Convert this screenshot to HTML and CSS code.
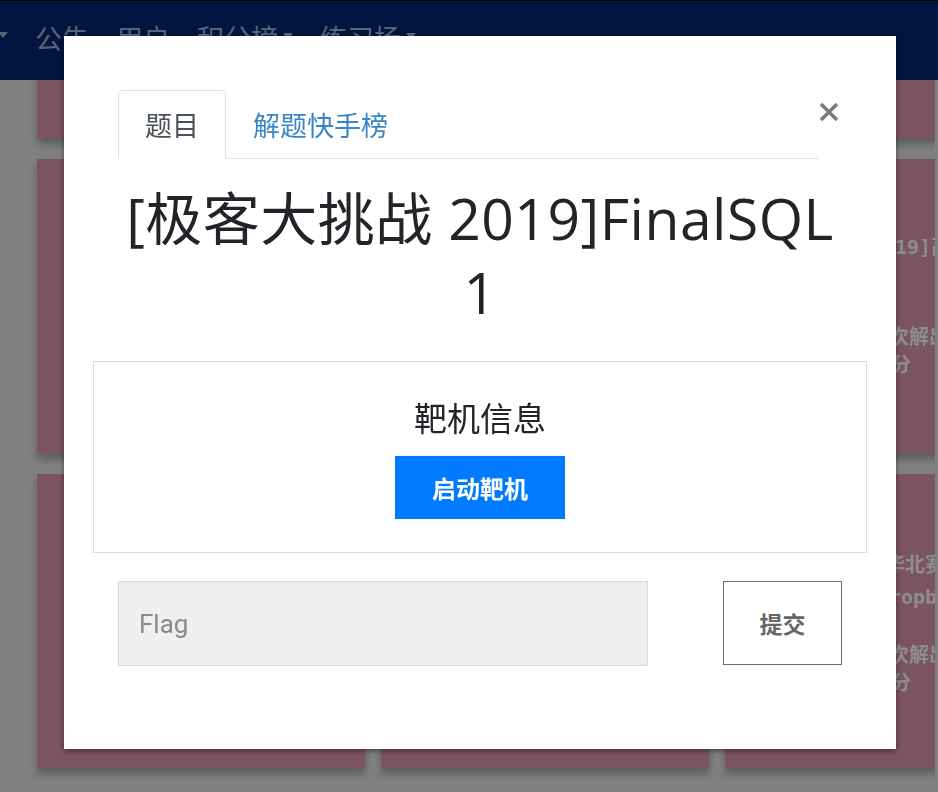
FILE: index.html
```html
<!DOCTYPE html>
<html lang="zh">
<head>
<meta charset="utf-8">
<title>FinalSQL</title>
<link rel="stylesheet" href="styles.css">
</head>
<body>
<nav class="navbar">
  <span class="caret lead"></span>
  <a class="nav-link">公告</a>
  <a class="nav-link">用户</a>
  <a class="nav-link">积分榜<span class="caret"></span></a>
  <a class="nav-link">练习场<span class="caret"></span></a>
</nav>

<main class="content">
  <div class="grid">
    <div class="card"><p class="c-title">[极客大挑战 2019]EasySQL</p><p class="c-meta">8520 次解出</p><p class="c-meta">1 分</p></div>
    <div class="card"><p class="c-title">[HCTF 2018]WarmUp</p><p class="c-meta">9231 次解出</p><p class="c-meta">1 分</p></div>
    <div class="card"><p class="c-title">[极客大挑战 2019]Havefun</p><p class="c-meta">7722 次解出</p><p class="c-meta">1 分</p></div>
    <div class="card"><p class="c-title">[极客大挑战 2019]HardSQL</p><p class="c-meta">2716 次解出</p><p class="c-meta">1 分</p></div>
    <div class="card"><p class="c-title">[极客大挑战 2019]FinalSQL</p><p class="c-meta">1348 次解出</p><p class="c-meta">1 分</p></div>
    <div class="card"><p class="c-title">[极客大挑战 2019]高明的黑客</p><p class="c-meta">1234 次解出</p><p class="c-meta">1 分</p></div>
    <div class="card"><p class="c-title">[CISCN2019 华北赛区 Day2 Web1]Hack World</p><p class="c-meta">2905 次解出</p><p class="c-meta">1 分</p></div>
    <div class="card"><p class="c-title">[网鼎杯 2018]Fakebook</p><p class="c-meta">2310 次解出</p><p class="c-meta">1 分</p></div>
    <div class="card card-low"><p class="c-title">[CISCN2019 华北赛区 Day1 Web1]Dropbox</p><p class="c-meta">1108 次解出</p><p class="c-meta">1 分</p></div>
  </div>
</main>

<div class="modal">
  <div class="modal-header">
    <ul class="tabs">
      <li class="tab active"><a>题目</a></li>
      <li class="tab"><a>解题快手榜</a></li>
    </ul>
    <button class="close" aria-label="Close">
      <svg width="22" height="22" viewBox="0 0 22 22"><path d="M3 3L19 19M19 3L3 19" stroke="#7b7b7b" stroke-width="3.6" stroke-linecap="butt"/></svg>
    </button>
  </div>

  <h1 class="title">[极客大挑战 2019]FinalSQL 1</h1>

  <section class="target">
    <h3 class="target-head">靶机信息</h3>
    <button class="btn-start">启动靶机</button>
  </section>

  <form class="flag-row">
    <input class="flag-input" type="text" placeholder="Flag">
    <button class="btn-submit" type="button">提交</button>
  </form>
</div>
</body>
</html>
```

FILE: styles.css
```css
html, body {
  margin: 0;
  padding: 0;
}
body {
  background: #808080;
  height: 792px;
  overflow: hidden;
  font-family: "Noto Sans", "Noto Sans CJK SC", sans-serif;
}

/* navbar */
.navbar {
  position: fixed;
  top: 0;
  left: 0;
  right: 0;
  height: 80px;
  border-top: 1px solid #000;
  background: #01153f;
  display: flex;
  align-items: flex-start;
  gap: 27px;
  padding-top: 22px;
  box-sizing: border-box;
  z-index: 1;
}
.nav-link {
  color: #5a6378;
  font-size: 27px;
  line-height: 30px;
  font-family: "Noto Sans CJK SC", sans-serif;
  display: flex;
  align-items: flex-start;
}
.caret {
  display: inline-block;
  width: 0;
  height: 0;
  border-top: 6px solid #5a6378;
  border-left: 5px solid transparent;
  border-right: 5px solid transparent;
  margin-left: 5px;
  margin-top: 10px;
}
.caret.lead {
  margin: 9px 0 0 -2px;
}

/* cards in background */
.content {
  width: 935px;
  overflow: hidden;
  margin-top: -156px;
}
.grid {
  display: grid;
  grid-template-columns: repeat(3, 328px);
  column-gap: 16px;
  row-gap: 21px;
  padding: 0 0 30px 37px;
}
.card {
  height: 294px;
  background: #7c5461;
  box-shadow: 0 6px 8px rgba(0, 0, 0, 0.28);
  padding-top: 72px;
  box-sizing: border-box;
  text-align: center;
  color: #8d8d8d;
  font-family: "DejaVu Sans Mono", "Noto Sans CJK SC", monospace;
  font-weight: bold;
  font-size: 20px;
}
.card-low {
  padding-top: 75px;
}
.c-title {
  margin: 0 0 28px;
  line-height: 32px;
  height: 64px;
}
.c-meta {
  margin: 0;
  line-height: 28px;
}

/* modal */
.modal {
  position: fixed;
  left: 64px;
  top: 36px;
  width: 832px;
  height: 713px;
  background: #fff;
  box-shadow: 0 2px 5px rgba(0, 0, 0, 0.45);
  padding: 0 29px;
  box-sizing: border-box;
  z-index: 2;
  font-family: "Noto Sans CJK SC", sans-serif;
}
.modal-header {
  display: flex;
  align-items: flex-start;
  padding: 54px 27px 0 25px;
}
.tabs {
  flex: 1;
  display: flex;
  list-style: none;
  margin: 0;
  padding: 0;
  border-bottom: 1px solid #dee2e6;
}
.tab {
  margin-bottom: -1px;
}
.tab a {
  display: block;
  padding: 0 26px;
  height: 67px;
  line-height: 67px;
  font-size: 27px;
  color: #3a86c8;
  border: 1px solid transparent;
  border-radius: 5px 5px 0 0;
}
.tab.active a {
  color: #495057;
  border-color: #dee2e6 #dee2e6 #fff;
  background: #fff;
}
.close {
  width: 22px;
  height: 22px;
  margin-top: 11px;
  padding: 0;
  border: 0;
  background: none;
  display: flex;
}

.title {
  margin: 22px 20px 0;
  text-align: center;
  font-family: "Open Sans", "Noto Sans CJK SC", sans-serif;
  font-weight: 400;
  font-size: 57px;
  line-height: 74px;
  letter-spacing: 0.5px;
  color: #212529;
}

.target {
  margin-top: 32px;
  border: 1px solid #dcdcdc;
  height: 192px;
  box-sizing: border-box;
  padding-top: 35px;
  text-align: center;
}
.target-head {
  margin: 0;
  font-weight: 400;
  font-size: 33px;
  line-height: 40px;
  color: #212529;
}
.btn-start {
  margin-top: 19px;
  width: 170px;
  height: 63px;
  border: 0;
  background: #007bff;
  color: #fff;
  font-family: "Noto Sans CJK SC", sans-serif;
  font-weight: 700;
  font-size: 24px;
}

.flag-row {
  display: flex;
  justify-content: space-between;
  margin: 28px 0 0;
  padding: 0 25px;
}
.flag-input {
  width: 530px;
  height: 85px;
  box-sizing: border-box;
  background: #efefef;
  border: 1px solid #d6dadf;
  padding: 0 20px;
  font-family: "Roboto", sans-serif;
  font-size: 26px;
  color: #555;
  outline: none;
}
.flag-input::placeholder {
  color: #8a8a8a;
}
.btn-submit {
  width: 119px;
  height: 84px;
  background: #fff;
  border: 1px solid #6d6d6d;
  color: #666;
  font-family: "Noto Sans CJK SC", sans-serif;
  font-weight: 700;
  font-size: 23px;
}
```
